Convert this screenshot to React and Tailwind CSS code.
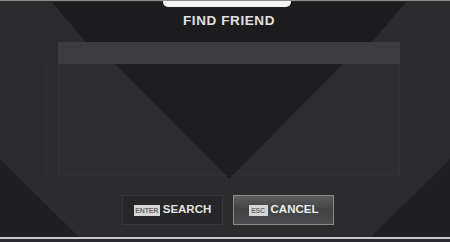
import React from "react";

function Backdrop() {
  return (
    <svg className="absolute inset-0" width="450" height="242" viewBox="0 0 450 242">
      <rect x="0" y="0" width="450" height="242" fill="#2c2c2e" />
      <polygon points="52,1 85,40 115,63 229,178 343,63 373,40 406,1" fill="#1c1c1e" />
      <polygon points="0,158 0,237 80,237" fill="#1f1f21" />
      <polygon points="450,158 450,237 370,237" fill="#1f1f21" />
      <line x1="47" y1="64" x2="47" y2="176" stroke="#303032" strokeWidth="1" />
      <line x1="411" y1="64" x2="411" y2="176" stroke="#303032" strokeWidth="1" />
    </svg>
  );
}

function KeyBadge({ label, w }) {
  return (
    <span
      className={`flex h-[11px] items-center justify-center bg-[#d6d6d6] text-[7px] font-bold leading-none tracking-[-0.2px] text-[#6a6a6a] ${w}`}
    >
      {label}
    </span>
  );
}

export default function App() {
  return (
    <div
      className="relative h-[242px] w-[450px] overflow-hidden border-t border-[#8c8c8c] bg-[#2c2c2e]"
      style={{ fontFamily: '"Liberation Sans", Arial, sans-serif' }}
    >
      <Backdrop />
      <div className="relative flex h-full flex-col">
        <div className="flex justify-center pl-[4px]">
          <div className="h-[6px] w-[128px] rounded-b-[5px] bg-[#f4f4f4]" />
        </div>
        <div className="mt-[7px] pl-[8px] text-center text-[13.5px] font-bold leading-[13px] tracking-[0.6px] text-[#e0e0e0]">
          FIND FRIEND
        </div>
        <div className="ml-[58px] mt-[15px] h-[22px] w-[342px] bg-[#3d3d40]" />
        <div className="ml-[58px] h-[112px] w-[342px] border-x border-b border-white/[0.02] bg-white/[0.012]" />
        <div className="mt-[19px] flex justify-center gap-[10px] pl-[6px]">
          <div className="flex h-[30px] w-[101px] items-center justify-center gap-[3px] border border-[#38383a] bg-[#272729]">
            <KeyBadge label="ENTER" w="w-[26px]" />
            <span className="text-[11.5px] font-bold leading-none text-[#e2e2e2]">SEARCH</span>
          </div>
          <div className="flex h-[30px] w-[101px] items-center justify-center gap-[3px] border border-[#8a8a8a] bg-gradient-to-b from-[#5c5c5e] via-[#424244] to-[#4c4c4e]">
            <KeyBadge label="ESC" w="w-[19px]" />
            <span className="text-[11.5px] font-bold leading-none text-[#ececec]">CANCEL</span>
          </div>
        </div>
        <div className="mt-auto h-[2px] bg-[#c8c8c8]" />
        <div className="h-[3px] bg-[#2a2a30]" />
      </div>
    </div>
  );
}
